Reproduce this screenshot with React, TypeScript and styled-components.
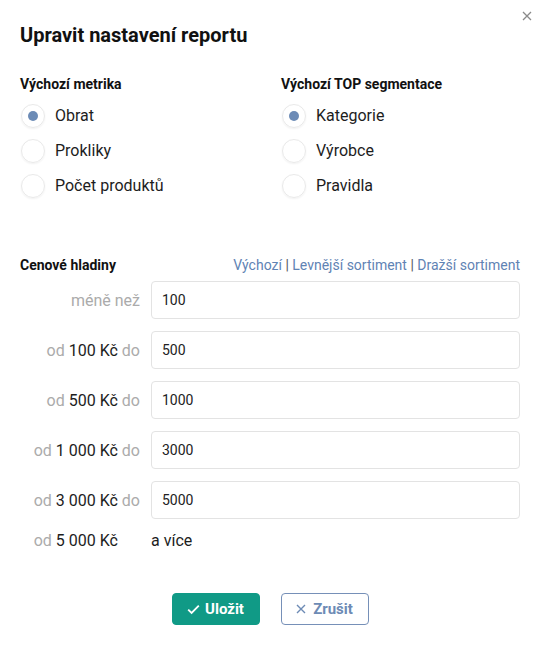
import styled, {createGlobalStyle} from 'styled-components';

const GlobalStyle = createGlobalStyle`
    body {
        margin: 0;
        background: #fff;
        font-family: Roboto, "Noto Sans", Arial, sans-serif;
        color: #1d1d1d;
    }
`;

const metrics = ['Obrat', 'Prokliky', 'Počet produktů'];
const segments = ['Kategorie', 'Výrobce', 'Pravidla'];

const levels = [
    {from: null, value: '100'},
    {from: '100', value: '500'},
    {from: '500', value: '1000'},
    {from: '1 000', value: '3000'},
    {from: '3 000', value: '5000'},
];

interface RadioProps {
    label: string;
    checked: boolean;
}

const Radio = ({label, checked}: RadioProps) => (
    <RadioRow>
        <RadioCircle $checked={checked} />
        <span>{label}</span>
    </RadioRow>
);

const App = () => {
    return (
        <Dialog>
            <GlobalStyle />
            <CloseButton aria-label='Zavřít'>
                <svg width='10' height='10' viewBox='0 0 10 10'>
                    <path d='M1 1L9 9M9 1L1 9' stroke='#8a8a8a' strokeWidth='1.3' />
                </svg>
            </CloseButton>

            <Title>Upravit nastavení reportu</Title>

            <Columns>
                <div>
                    <SectionLabel>Výchozí metrika</SectionLabel>
                    {metrics.map((m, i) => (
                        <Radio key={m} label={m} checked={i === 0} />
                    ))}
                </div>
                <div>
                    <SectionLabel>Výchozí TOP segmentace</SectionLabel>
                    {segments.map((s, i) => (
                        <Radio key={s} label={s} checked={i === 0} />
                    ))}
                </div>
            </Columns>

            <PriceHeader>
                <SectionLabel>Cenové hladiny</SectionLabel>
                <Presets>
                    <a>Výchozí</a> | <a>Levnější sortiment</a> | <a>Dražší sortiment</a>
                </Presets>
            </PriceHeader>

            <PriceGrid>
                {levels.map((l) => (
                    <PriceRow key={l.value}>
                        <RangeLabel>
                            {l.from === null ? (
                                <Muted>méně než</Muted>
                            ) : (
                                <>
                                    <Muted>od</Muted> {l.from} Kč <Muted>do</Muted>
                                </>
                            )}
                        </RangeLabel>
                        <PriceInput defaultValue={l.value} />
                    </PriceRow>
                ))}
                <PriceRow>
                    <RangeLabel>
                        <Muted>od</Muted> 5 000 Kč <Muted $hidden>do</Muted>
                    </RangeLabel>
                    <Rest>a více</Rest>
                </PriceRow>
            </PriceGrid>

            <Actions>
                <SaveButton>
                    <svg width='13' height='11' viewBox='0 0 13 11'>
                        <path d='M1.2 5.6L4.6 9L11.8 1.6' fill='none' stroke='#fff' strokeWidth='1.8' />
                    </svg>
                    Uložit
                </SaveButton>
                <CancelButton>
                    <svg width='10' height='10' viewBox='0 0 10 10'>
                        <path d='M1 1L9 9M9 1L1 9' stroke='#6d8bb5' strokeWidth='1.4' />
                    </svg>
                    Zrušit
                </CancelButton>
            </Actions>
        </Dialog>
    );
};

export default App;

const Dialog = styled.div`
    position: relative;
    box-sizing: border-box;
    width: 544px;
    min-height: 647px;
    padding: 23px 24px 20px 20px;
`;

const CloseButton = styled.button`
    position: absolute;
    top: 10px;
    right: 11px;
    width: 12px;
    height: 12px;
    padding: 0;
    border: 0;
    background: none;
    display: flex;
    align-items: center;
    justify-content: center;
`;

const Title = styled.h1`
    margin: 0 0 27px;
    font-size: 20px;
    line-height: 24px;
    font-weight: 700;
    color: #111;
`;

const Columns = styled.div`
    display: grid;
    grid-template-columns: 1fr 1fr;
    column-gap: 22px;
`;

const SectionLabel = styled.div`
    font-size: 14px;
    line-height: 20px;
    font-weight: 700;
    color: #111;
    margin-bottom: 4px;
`;

const RadioRow = styled.label`
    display: flex;
    align-items: center;
    gap: 10px;
    height: 35px;
    font-size: 16px;
    color: #1d1d1d;
`;

const RadioCircle = styled.span<{$checked: boolean}>`
    box-sizing: border-box;
    width: 24px;
    height: 24px;
    margin-left: 1px;
    border-radius: 50%;
    border: 1px solid #e9e9e9;
    box-shadow: 0 1px 2px rgba(0, 0, 0, 0.06);
    display: flex;
    align-items: center;
    justify-content: center;

    &::after {
        content: '';
        width: 10px;
        height: 10px;
        border-radius: 50%;
        background: ${({$checked}) => ($checked ? '#6c8bb6' : 'transparent')};
    }
`;

const PriceHeader = styled.div`
    margin-top: 52px;
    display: flex;
    justify-content: space-between;
    align-items: baseline;

    ${SectionLabel} {
        margin-bottom: 0;
    }
`;

const Presets = styled.div`
    font-size: 14px;
    color: #555;

    a {
        color: #5f83b4;
        cursor: pointer;
    }
`;

const PriceGrid = styled.div`
    margin-top: 6px;
    display: flex;
    flex-direction: column;
    gap: 12px;
`;

const PriceRow = styled.div`
    display: grid;
    grid-template-columns: 120px 1fr;
    column-gap: 11px;
    align-items: center;
`;

const RangeLabel = styled.div`
    text-align: right;
    font-size: 16px;
    white-space: nowrap;
    color: #1d1d1d;
`;

const Muted = styled.span<{$hidden?: boolean}>`
    color: #ababab;
    visibility: ${({$hidden}) => ($hidden ? 'hidden' : 'visible')};
`;

const PriceInput = styled.input`
    box-sizing: border-box;
    height: 38px;
    width: 100%;
    padding: 0 10px;
    border: 1px solid #e3e3e3;
    border-radius: 4px;
    font-family: Roboto, Arial, sans-serif;
    font-size: 14px;
    color: #222;
    outline: none;
`;

const Rest = styled.div`
    font-size: 16px;
    color: #1d1d1d;
`;

const Actions = styled.div`
    margin-top: 43px;
    display: flex;
    justify-content: center;
    gap: 21px;
`;

const ButtonBase = styled.button`
    box-sizing: border-box;
    width: 88px;
    height: 32px;
    border-radius: 4px;
    display: inline-flex;
    align-items: center;
    justify-content: center;
    gap: 5px;
    font-family: Roboto, Arial, sans-serif;
    font-size: 15px;
    font-weight: 700;
    cursor: pointer;
`;

const SaveButton = styled(ButtonBase)`
    background: #109a86;
    border: 1px solid #109a86;
    color: #fff;
`;

const CancelButton = styled(ButtonBase)`
    background: #fff;
    border: 1px solid #7690b8;
    color: #6d8bb5;
    gap: 7px;
`;
